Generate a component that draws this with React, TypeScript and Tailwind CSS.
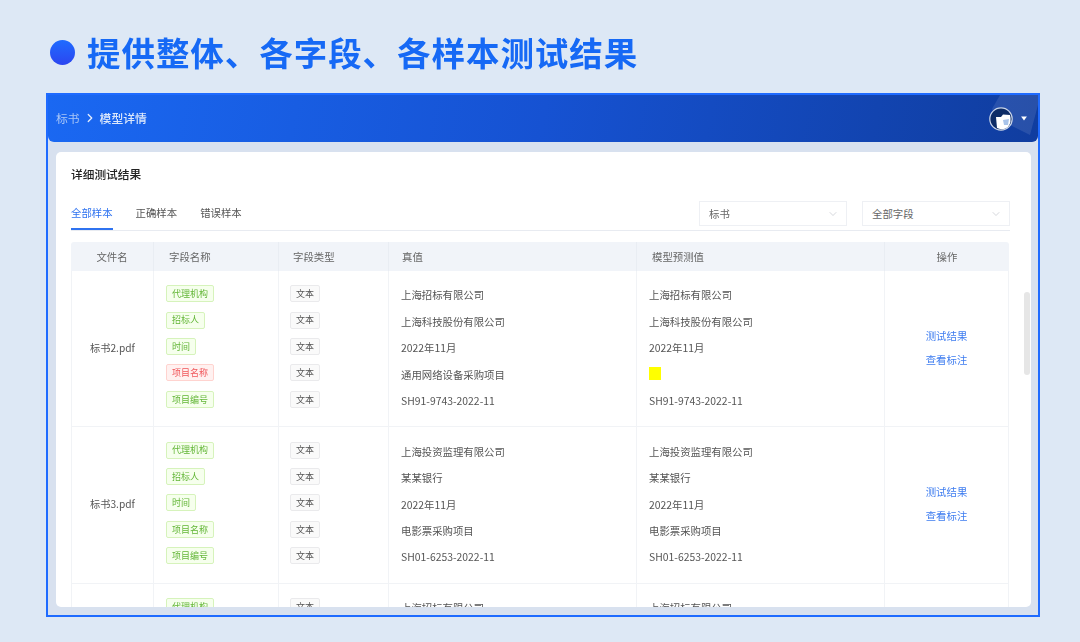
import { ChevronDown, ChevronRight } from "lucide-react";

const font = { fontFamily: '"Noto Sans CJK SC", "Noto Sans", sans-serif' };

const cols = "grid grid-cols-[83px_125px_110px_248px_248px_124px]";

type Row = { file: string; names: string[]; truth: string[]; pred: string[]; bad?: number; ops?: boolean };

const rows: Row[] = [
  {
    file: "标书2.pdf",
    names: ["代理机构", "招标人", "时间", "项目名称", "项目编号"],
    truth: ["上海招标有限公司", "上海科技股份有限公司", "2022年11月", "通用网络设备采购项目", "SH91-9743-2022-11"],
    pred: ["上海招标有限公司", "上海科技股份有限公司", "2022年11月", "", "SH91-9743-2022-11"],
    bad: 3,
    ops: true,
  },
  {
    file: "标书3.pdf",
    names: ["代理机构", "招标人", "时间", "项目名称", "项目编号"],
    truth: ["上海投资监理有限公司", "某某银行", "2022年11月", "电影票采购项目", "SH01-6253-2022-11"],
    pred: ["上海投资监理有限公司", "某某银行", "2022年11月", "电影票采购项目", "SH01-6253-2022-11"],
    ops: true,
  },
  {
    file: "",
    names: ["代理机构"],
    truth: ["上海招标有限公司"],
    pred: ["上海招标有限公司"],
  },
];

function Values({ items }: { items: string[] }) {
  return (
    <div className="flex flex-col border-r border-[#f1f3f6] pt-[11px] pl-[12px]">
      {items.map((t, i) => (
        <div key={i} className="flex h-[26.4px] shrink-0 items-center whitespace-nowrap text-[10.4px] text-[#555]">
          {t === "" ? <span className="mb-[2px] h-[13px] w-[12px] bg-[#ffff00]" /> : t}
        </div>
      ))}
    </div>
  );
}

function TableRow({ row }: { row: Row }) {
  return (
    <div className={`${cols} h-[156.4px] shrink-0 border-b border-[#f1f3f6]`}>
      <div className="flex items-center justify-center border-x border-[#f1f3f6] pb-[2px] text-[10.2px] text-[#555]">
        {row.file}
      </div>
      <div className="flex flex-col items-start border-r border-[#f1f3f6] pt-[9.5px] pl-[12px]">
        {row.names.map((n, i) => (
          <div key={i} className="flex h-[26.4px] shrink-0 items-center">
            {i === row.bad ? (
              <span className="flex h-[17px] items-center rounded-[2px] border border-[#ffd3cf] bg-[#fff1f0] px-[5px] text-[9px] text-[#f0565a]">
                {n}
              </span>
            ) : (
              <span className="flex h-[17px] items-center rounded-[2px] border border-[#d6f3bb] bg-[#f6ffed] px-[5px] text-[9px] text-[#62b636]">
                {n}
              </span>
            )}
          </div>
        ))}
      </div>
      <div className="flex flex-col items-start border-r border-[#f1f3f6] pt-[9.5px] pl-[11px]">
        {row.names.map((_, i) => (
          <div key={i} className="flex h-[26.4px] shrink-0 items-center">
            <span className="flex h-[17px] items-center rounded-[2px] border border-[#eaeaec] bg-[#fafafa] px-[5px] text-[9px] text-[#555]">
              文本
            </span>
          </div>
        ))}
      </div>
      <Values items={row.truth} />
      <Values items={row.pred} />
      <div className="flex flex-col items-center justify-center gap-[10px] border-r border-[#f1f3f6] pb-[2px] text-[10.4px] leading-[14px] text-[#3f7df0]">
        {row.ops && <span>测试结果</span>}
        {row.ops && <span>查看标注</span>}
      </div>
    </div>
  );
}

function Select({ label }: { label: string }) {
  return (
    <div className="flex h-[25px] w-[148px] items-center justify-between border border-[#eef0f4] bg-white pl-[9px] pr-[7px] text-[10.4px] text-[#666]">
      <span>{label}</span>
      <ChevronDown className="h-[12px] w-[12px] text-[#b8bcc4]" strokeWidth={1.2} />
    </div>
  );
}

export default function App() {
  return (
    <div style={font} className="flex h-[642px] w-[1080px] flex-col overflow-hidden bg-[#dde8f5] pl-[46px]">
      <div className="flex h-[93px] shrink-0 items-center gap-[12px] pl-[4px] pt-[11px]">
        <span className="h-[25px] w-[25px] rounded-full bg-gradient-to-b from-[#1f6bff] to-[#2b45f0]" />
        <h1 className="text-[33.5px] font-bold leading-none tracking-[0.95px] text-[#1669f5] blur-[0.3px]">
          提供整体、各字段、各样本测试结果
        </h1>
      </div>

      <div className="flex h-[524px] w-[994px] shrink-0 flex-col border-2 border-[#1f6bff] bg-[#d8e1ef]">
        <header className="relative flex h-[47px] shrink-0 items-center justify-between overflow-hidden rounded-b-[6px] bg-[linear-gradient(100deg,#1a68f2_0%,#1652d2_50%,#103d9f_100%)] pb-[2px] pl-[8px] pr-[11px]">
          <svg className="absolute right-0 top-0 h-[47px] w-[50px]" viewBox="0 0 50 47">
            <polygon points="12,0 50,0 50,10 42,40 14,26 4,14" fill="#ffffff" fillOpacity="0.1" />
          </svg>
          <div className="flex items-center text-[11.8px] blur-[0.4px]">
            <span className="text-[#a9c6f7]">标书</span>
            <ChevronRight className="mx-[3px] h-[14px] w-[14px] text-[#e6eefc]" strokeWidth={2.2} />
            <span className="font-medium text-[#dbe7fb]">模型详情</span>
          </div>
          <div className="relative flex items-center gap-[8px] pt-[2px] blur-[0.3px]">
            <svg className="h-[24px] w-[24px]" viewBox="0 0 24 24">
              <circle cx="12" cy="12" r="11.2" fill="#0d2c66" stroke="#c9d5ea" strokeWidth="1.2" />
              <path d="M7 10 L12 10 L14 7.5 L21 8 Q23 15 19 20 Q15 23 11 22 L8 21 Z" fill="#ffffff" />
              <path d="M14 13 L20 12 L19 18 L15 18 Z" fill="#a9c4ea" />
            </svg>
            <svg className="h-[5px] w-[6px]" viewBox="0 0 7 6">
              <polygon points="0,0.5 7,0.5 3.5,5.5" fill="#ffffff" />
            </svg>
          </div>
        </header>

        <main className="relative mx-[8px] mt-[10px] flex h-[455px] w-[975px] flex-col overflow-hidden rounded-[5px] bg-white pl-[15px]">
          <div className="blur-[0.4px]">
            <h2 className="mt-[13px] text-[11.7px] font-medium leading-[17px] text-[#222]">详细测试结果</h2>
            <div className="relative mt-[10px] flex h-[39px] w-[939px] shrink-0 items-end justify-between border-b border-[#e8ebf1]">
              <div className="flex gap-[23px] text-[10.4px] text-[#555]">
                <span className="border-b-2 border-[#2f73f0] pb-[8px] leading-[15px] text-[#2f73f0]">全部样本</span>
                <span className="pb-[10px] leading-[15px]">正确样本</span>
                <span className="pb-[10px] leading-[15px]">错误样本</span>
              </div>
              <div className="mb-[4px] flex gap-[15px]">
                <Select label="标书" />
                <Select label="全部字段" />
              </div>
            </div>

            <div className="mt-[11px] flex w-[938px] flex-col">
              <div className={`${cols} h-[29px] shrink-0 rounded-t-[3px] bg-[#f1f4f9] text-[10.4px] text-[#666]`}>
                <div className="flex items-center justify-center border-r border-[#e9edf3]">文件名</div>
                <div className="flex items-center border-r border-[#e9edf3] pl-[15px]">字段名称</div>
                <div className="flex items-center border-r border-[#e9edf3] pl-[14px]">字段类型</div>
                <div className="flex items-center border-r border-[#e9edf3] pl-[13px]">真值</div>
                <div className="flex items-center border-r border-[#e9edf3] pl-[15px]">模型预测值</div>
                <div className="flex items-center justify-center">操作</div>
              </div>
              {rows.map((r, i) => (
                <TableRow key={i} row={r} />
              ))}
            </div>
          </div>

          <div className="absolute right-[1px] top-[140px] h-[83px] w-[6px] rounded-[3px] bg-[#e6e6e6]" />
        </main>
      </div>
    </div>
  );
}
